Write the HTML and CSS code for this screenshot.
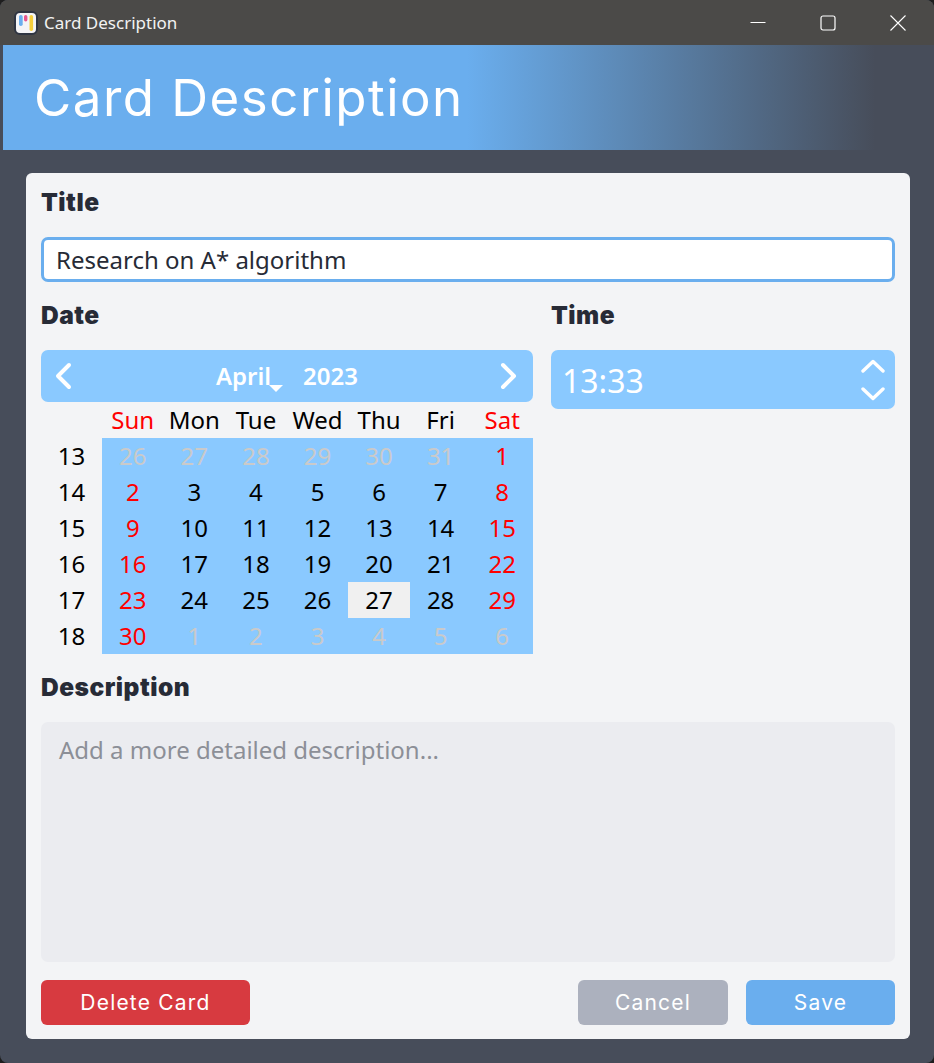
FILE: index.html
```html
<!doctype html>
<html>
<head>
    <meta charset='utf-8'>
    <title>Card Description</title>
    <link rel="stylesheet" href="styles.css">
</head>
<body>
    <div class="window">
        <div class="titleBar">
            <svg class="appIcon" width="24" height="24" viewBox="0 0 24 24">
                <rect x="1" y="1" width="22" height="22" rx="5" fill="#f4f4f6" stroke="#2f3542" stroke-width="2"/>
                <rect x="5" y="4" width="3.7" height="11" rx="1.8" fill="#6aaeee"/>
                <rect x="10" y="4" width="3.4" height="6.5" rx="1.7" fill="#e8568f"/>
                <rect x="15.5" y="4" width="3.6" height="16" rx="1.8" fill="#f6cf3c"/>
            </svg>
            <span class="windowTitle">Card Description</span>
            <div class="windowButtons">
                <svg width="16" height="16" viewBox="0 0 16 16"><path d="M0.5 7.5H15.5" stroke="#fff" fill="none"/></svg>
                <svg width="16" height="16" viewBox="0 0 16 16"><rect x="1" y="1" width="14" height="14" rx="2" stroke="#fff" stroke-width="1.2" fill="none"/></svg>
                <svg width="16" height="16" viewBox="0 0 16 16"><path d="M0.5 0.5L15.5 15.5M15.5 0.5L0.5 15.5" stroke="#fff" stroke-width="1.1" fill="none"/></svg>
            </div>
        </div>

        <div class="banner"><h1>Card Description</h1></div>

        <div class="card">
            <h2 class="titleLabel">Title</h2>
            <div class="titleField">Research on A* algorithm</div>

            <div class="dateTimeRow">
                <div class="dateColumn">
                    <h2>Date</h2>
                    <div class="calendarNav">
                        <svg width="20" height="28" viewBox="0 0 20 28"><path d="M16 3L5 14L16 25" stroke="#fff" stroke-width="4" stroke-linecap="round" stroke-linejoin="round" fill="none"/></svg>
                        <div class="monthYear">
                            <span class="month">April</span>
                            <span>2023</span>
                        </div>
                        <svg width="20" height="28" viewBox="0 0 20 28"><path d="M4 3L15 14L4 25" stroke="#fff" stroke-width="4" stroke-linecap="round" stroke-linejoin="round" fill="none"/></svg>
                    </div>
                    <div class="calendar" id="calendar"></div>
                </div>
                <div class="timeColumn">
                    <h2>Time</h2>
                    <div class="timeField">
                        <span class="timeValue">13:33</span>
                        <div class="spinner">
                            <svg width="24" height="14" viewBox="0 0 24 14"><path d="M2 12L12 2.5L22 12" stroke="#fff" stroke-width="3.4" stroke-linecap="round" stroke-linejoin="round" fill="none"/></svg>
                            <svg width="24" height="14" viewBox="0 0 24 14"><path d="M2 2L12 11.5L22 2" stroke="#fff" stroke-width="3.4" stroke-linecap="round" stroke-linejoin="round" fill="none"/></svg>
                        </div>
                    </div>
                </div>
            </div>

            <h2 class="descriptionLabel">Description</h2>
            <div class="descriptionField">Add a more detailed description...</div>

            <div class="buttonRow">
                <div class="button deleteButton">Delete Card</div>
                <div class="rightButtons">
                    <div class="button cancelButton">Cancel</div>
                    <div class="button saveButton">Save</div>
                </div>
            </div>
        </div>
    </div>
    <script>
        var calendar = document.getElementById("calendar");

        function addCell(text, className) {
            var cell = document.createElement("div");
            cell.className = className;
            cell.appendChild(document.createTextNode(text));
            calendar.appendChild(cell);
        }

        var days = ["Sun", "Mon", "Tue", "Wed", "Thu", "Fri", "Sat"];
        addCell("", "weekNumber");
        for (var i = 0; i < days.length; i++) {
            addCell(days[i], (i == 0 || i == 6) ? "dayName weekend" : "dayName");
        }

        // first cell of the grid is Sun 26 March
        var week = 13;
        var day = 26;
        var inMonth = false;
        for (var i = 0; i < 42; i++) {
            if (i % 7 == 0) {
                addCell(week, "weekNumber");
                week++;
            }
            var className = "day";
            if (i % 7 == 0 || i % 7 == 6) {
                className += " weekend";
            }
            if (!inMonth && day > 31) {
                day = 1;
                inMonth = true;
            } else if (inMonth && day > 30) {
                day = 1;
                inMonth = false;
            }
            if (!inMonth) {
                className = "day otherMonth";
            }
            if (inMonth && day == 27) {
                className += " today";
            }
            addCell(day, className);
            day++;
        }
    </script>
</body>
</html>
```

FILE: styles.css
```css
* {
    box-sizing: border-box;
}

html, body {
    margin: 0;
    padding: 0;
    background: #1e1e1e;
}

h1, h2 {
    margin: 0;
}

.window {
    width: 934px;
    height: 1063px;
    background: #474d5a;
    border-radius: 8px;
    overflow: hidden;
    padding: 0 3px;
    font-family: "Noto Sans", sans-serif;
    display: flex;
    flex-direction: column;
}

.titleBar {
    height: 45px;
    margin: 0 -3px;
    flex: none;
    background: #4b4a48;
    color: #fff;
    display: flex;
    align-items: center;
    padding: 0 28px 0 14px;
    font-size: 17px;
}

.appIcon {
    flex: none;
}

.windowTitle {
    margin-left: 6px;
    color: #f2f2f2;
}

.windowButtons {
    margin-left: auto;
    display: flex;
    gap: 54px;
}

.banner {
    height: 105px;
    flex: none;
    background: linear-gradient(to right, #6aaeee 50%, #474d5a 94%);
    padding-left: 31px;
    display: flex;
    align-items: center;
}

.banner h1 {
    font-family: "Inter", sans-serif;
    font-weight: 400;
    font-size: 51px;
    letter-spacing: 1.5px;
    color: #fff;
}

.card {
    margin: 23px 21px 0 23px;
    height: 866px;
    flex: none;
    background: #f3f4f6;
    border-radius: 6px;
    padding: 16px 15px 15px;
}

.card h2 {
    font-family: "Inter", sans-serif;
    font-weight: 900;
    font-size: 24.5px;
    letter-spacing: 0.5px;
    line-height: 26px;
    padding-bottom: 2px;
    color: #272b36;
}

.titleField {
    margin-top: 20px;
    height: 45px;
    background: #fff;
    border: 3px solid #6aaeee;
    border-radius: 7px;
    padding-left: 12px;
    font-size: 24px;
    line-height: 40px;
    color: #272b36;
}

.dateTimeRow {
    display: flex;
    gap: 18px;
    margin-top: 20px;
}

.dateColumn {
    width: 492px;
    flex: none;
}

.timeColumn {
    flex: 1;
}

.calendarNav {
    margin-top: 20px;
    height: 52px;
    background: #8ac9ff;
    border-radius: 7px;
    display: flex;
    align-items: center;
    justify-content: space-between;
    padding: 0 14px 0 12px;
}

.monthYear {
    display: flex;
    gap: 32px;
    color: #fff;
    font-size: 24px;
    font-weight: 600;
    margin-top: -2px;
    margin-left: 2px;
}

.month {
    position: relative;
}

.month::after {
    content: "";
    position: absolute;
    right: -12px;
    bottom: 0;
    border-left: 7px solid transparent;
    border-right: 7px solid transparent;
    border-top: 7px solid #fff;
}

.calendar {
    display: grid;
    grid-template-columns: 61px repeat(7, 1fr);
    grid-auto-rows: 36px;
    font-size: 24px;
    line-height: 36px;
    text-align: center;
    color: #000;
}

.day {
    background: #8ac9ff;
}

.weekend {
    color: #f00;
}

.otherMonth {
    color: #cacaca;
}

.today {
    background: #f0f0f0;
}

.timeField {
    margin-top: 20px;
    height: 59px;
    background: #8ac9ff;
    border-radius: 7px;
    display: flex;
    align-items: center;
    justify-content: space-between;
    padding: 0 10px 0 11px;
    color: #fff;
    font-size: 32px;
}

.timeValue {
    margin-top: 2px;
}

.spinner {
    display: flex;
    flex-direction: column;
    gap: 14px;
}

.spinner svg {
    display: block;
}

.card .descriptionLabel {
    margin-top: 20px;
}

.descriptionField {
    margin-top: 20px;
    height: 240px;
    background: #ebecf0;
    border-radius: 7px;
    padding: 9px 18px;
    font-size: 24px;
    line-height: 38px;
    color: #8c8f97;
}

.buttonRow {
    margin-top: 18px;
    display: flex;
    justify-content: space-between;
}

.rightButtons {
    display: flex;
    gap: 18px;
}

.button {
    height: 45px;
    border-radius: 6px;
    color: #fff;
    font-family: "Inter", sans-serif;
    font-size: 21px;
    letter-spacing: 1.2px;
    line-height: 45px;
    text-align: center;
}

.deleteButton {
    width: 209px;
    background: #d73a40;
}

.cancelButton {
    width: 150px;
    background: #acb1be;
}

.saveButton {
    width: 149px;
    background: #6aaeee;
}
```
